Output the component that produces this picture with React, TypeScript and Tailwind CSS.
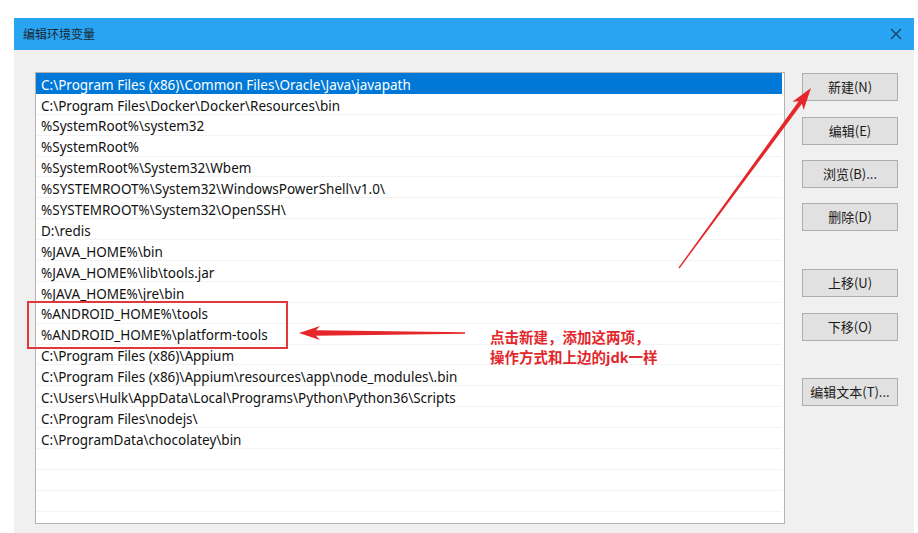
import React from 'react'

const paths = [
    'C:\\Program Files (x86)\\Common Files\\Oracle\\Java\\javapath',
    'C:\\Program Files\\Docker\\Docker\\Resources\\bin',
    '%SystemRoot%\\system32',
    '%SystemRoot%',
    '%SystemRoot%\\System32\\Wbem',
    '%SYSTEMROOT%\\System32\\WindowsPowerShell\\v1.0\\',
    '%SYSTEMROOT%\\System32\\OpenSSH\\',
    'D:\\redis',
    '%JAVA_HOME%\\bin',
    '%JAVA_HOME%\\lib\\tools.jar',
    '%JAVA_HOME%\\jre\\bin',
    '%ANDROID_HOME%\\tools',
    '%ANDROID_HOME%\\platform-tools',
    'C:\\Program Files (x86)\\Appium',
    'C:\\Program Files (x86)\\Appium\\resources\\app\\node_modules\\.bin',
    'C:\\Users\\Hulk\\AppData\\Local\\Programs\\Python\\Python36\\Scripts',
    'C:\\Program Files\\nodejs\\',
    'C:\\ProgramData\\chocolatey\\bin',
    '', '', '', '',
]

// 右側ボタン (上マージンは画面から計測)
const buttons = [
    { label: '新建(N)', mt: 'mt-0' },
    { label: '编辑(E)', mt: 'mt-[16px]' },
    { label: '浏览(B)...', mt: 'mt-[15px]' },
    { label: '删除(D)', mt: 'mt-[15px]' },
    { label: '上移(U)', mt: 'mt-[38px]' },
    { label: '下移(O)', mt: 'mt-[16px]' },
    { label: '编辑文本(T)...', mt: 'mt-[37px]' },
]

function DialogButton({ label, mt }: { label: string; mt: string }) {
    return (
        <button className={`${mt} h-[28px] w-[96px] border border-[#adadad] bg-[#e1e1e1] text-[13px] text-[#1a1a1a] font-['Noto_Sans_CJK_SC',sans-serif]`}>
            {label}
        </button>
    )
}

export default function App() {
    return (
        <div className="relative w-[918px] h-[533px] bg-white pl-[14px] pt-[18px] overflow-hidden font-['Noto_Sans','Noto_Sans_CJK_SC',sans-serif]">
            <div className="w-[900px] h-[515px] flex flex-col bg-[#f0f0f0]">
                {/* Title bar */}
                <div className="h-[32px] shrink-0 bg-[#29a4f2] flex items-center justify-between pl-[9px] pr-[12px]">
                    <span className="text-[12px] text-[#1b2733] font-['Noto_Sans_CJK_SC',sans-serif]">编辑环境变量</span>
                    <svg width="12" height="12" viewBox="0 0 12 12" className="text-[#1f3a52]">
                        <path d="M1 1 L11 11 M11 1 L1 11" stroke="currentColor" strokeWidth="1.1" />
                    </svg>
                </div>

                <div className="flex pl-[21px] pt-[22px]">
                    {/* List */}
                    <div className="w-[750px] h-[452px] border border-[#b4b4b4] bg-white overflow-hidden pr-[2px]">
                        {paths.map((p, i) => (
                            <div
                                key={i}
                                className={`h-[20.9px] flex items-center pl-[5px] pt-[5px] text-[13.5px] leading-none whitespace-nowrap border-b ${
                                    i === 0 ? 'bg-[#0078d7] text-white border-[#0078d7]' : 'text-[#111] border-[#f3f3f3]'
                                }`}
                            >
                                {p}
                            </div>
                        ))}
                    </div>

                    {/* Buttons */}
                    <div className="flex flex-col ml-[17px] pt-[1px]">
                        {buttons.map((b) => (
                            <DialogButton key={b.label} label={b.label} mt={b.mt} />
                        ))}
                    </div>
                </div>
            </div>

            {/* Annotations */}
            <div className="absolute left-[27px] top-[301px] w-[261px] h-[48px] border-2 border-[#e0383c]" />
            <div className="absolute left-[490px] top-[327px] text-[14.5px] leading-[20px] font-bold text-[#e2282c] font-['Noto_Sans_CJK_SC',sans-serif]">
                <div>点击新建，添加这两项，</div>
                <div>操作方式和上边的jdk一样</div>
            </div>
            <svg className="absolute left-0 top-0" width="918" height="533" viewBox="0 0 918 533">
                <polygon
                    fill="#e5262b"
                    points="299,333 320,326 316,330.2 465,332.3 465,333.7 316,335.8 320,340"
                />
                <polygon
                    fill="#e5262b"
                    points="679.5,268.4 801.9,103.7 803.6,109.9 811,88 792.4,101.7 798.7,101.3 678.5,267.6"
                />
            </svg>
        </div>
    )
}
